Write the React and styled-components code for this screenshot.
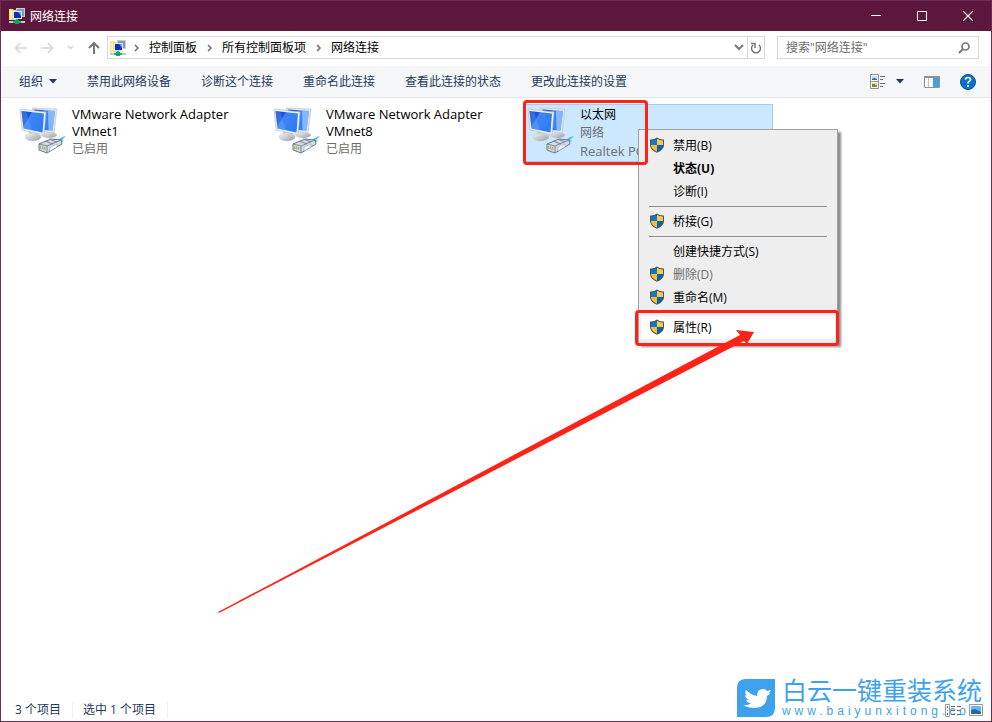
import styled, { createGlobalStyle } from "styled-components";

const GlobalStyle = createGlobalStyle`
  * {
    box-sizing: border-box;
  }

  body {
    margin: 0;
    background: #fff;
  }

  body,
  button,
  input {
    font-family: "Open Sans", "Noto Sans CJK SC", sans-serif;
    font-size: 12px;
  }

  button {
    padding: 0;
    border: 0;
    background: none;
    color: inherit;
  }
`;

const Window = styled.div`
  position: relative;
  display: flex;
  flex-direction: column;
  min-height: 100vh;
  border: 1px solid #6c2b51;
  background: #fff;
  overflow: hidden;
`;

const TitleBar = styled.header`
  display: flex;
  align-items: center;
  height: 30px;
  padding-left: 8px;
  background: #5e173c;
  color: #fff;
`;

const WindowTitle = styled.h1`
  flex: 1;
  margin: 0 0 0 5px;
  font-size: 12px;
  font-weight: 400;
`;

const CaptionButton = styled.button`
  display: flex;
  align-items: center;
  justify-content: center;
  width: 46px;
  height: 30px;
`;

const AddressRow = styled.div`
  display: flex;
  align-items: center;
  height: 35px;
  padding: 0 12px 2px 13px;
`;

const NavButtons = styled.nav`
  display: flex;
  align-items: center;
  justify-content: space-between;
  width: 86px;
  margin-right: 7px;
`;

const IconButton = styled.button`
  display: flex;
  align-items: center;
  justify-content: center;
`;

const AddressBar = styled.div`
  display: flex;
  flex: 1;
  align-items: center;
  height: 23px;
  padding-left: 2px;
  border: 1px solid #d9d9d9;
`;

const Crumbs = styled.div`
  display: flex;
  flex: 1;
  align-items: center;
  gap: 9px;
  padding-left: 7px;
`;

const Crumb = styled.a`
  color: #000;
  line-height: 20px;
  text-decoration: none;
`;

const AddressButton = styled(IconButton)`
  width: 17px;
  height: 21px;
  border-left: ${(props) => (props.$divided ? "1px solid #d9d9d9" : "0")};
`;

const SearchBox = styled.label`
  display: flex;
  align-items: center;
  width: 202px;
  height: 23px;
  margin-left: 12px;
  padding: 0 8px;
  border: 1px solid #d9d9d9;
`;

const SearchInput = styled.input`
  flex: 1;
  min-width: 0;
  padding: 0;
  border: 0;
  outline: 0;
  background: none;

  &::placeholder {
    color: #6d6d6d;
    opacity: 1;
  }
`;

const CommandBar = styled.div`
  display: flex;
  align-items: center;
  gap: 30px;
  height: 32px;
  padding: 0 15px 0 18px;
  border-bottom: 1px solid #e5e7ea;
  background: #f5f6f8;
  color: #1e395b;
`;

const Command = styled.button`
  display: flex;
  align-items: center;
  gap: 6px;
  line-height: 20px;
  white-space: nowrap;
`;

const ViewTools = styled.div`
  display: flex;
  align-items: center;
  gap: 20px;
  margin-left: auto;
`;

const ViewButton = styled(IconButton)`
  gap: 10px;
`;

const Content = styled.main`
  flex: 1;
  padding: 6px 14px;
`;

const Adapters = styled.ul`
  display: flex;
  flex-wrap: wrap;
  gap: 4px;
  margin: 0;
  padding: 0;
  list-style: none;
`;

const Adapter = styled.li`
  position: relative;
  display: flex;
  gap: 5px;
  width: 250px;
  height: 58px;
  padding: 1px 3px;
  border: 1px solid ${(props) => (props.$selected ? "#99d1ff" : "transparent")};
  background: ${(props) => (props.$selected ? "#cce8ff" : "transparent")};
`;

const AdapterText = styled.div`
  flex: 1;
`;

const AdapterName = styled.div`
  font-size: ${(props) => (props.$cjk ? "12px" : "13px")};
  line-height: ${(props) => (props.$cjk ? "18px" : "17px")};
`;

const AdapterDetail = styled.div`
  color: #6d6d6d;
  font-size: ${(props) => (props.$latin ? "13px" : "12px")};
  line-height: 18px;
`;

const Menu = styled.div`
  position: absolute;
  z-index: 2;
  top: 24px;
  left: 114px;
  width: 200px;
  padding: 4px 2px;
  border: 1px solid #a0a0a0;
  background: #eee;
  box-shadow: 3px 3px 2px rgba(0, 0, 0, 0.45);
`;

const MenuItem = styled.button`
  display: grid;
  grid-template-columns: 16px 1fr;
  gap: 8px;
  align-items: center;
  width: 100%;
  height: 23px;
  padding-left: 8px;
  background: ${(props) => (props.$active ? "#fff" : "none")};
  color: ${(props) => (props.disabled ? "#6d6d6d" : "#000")};
  font-weight: ${(props) => (props.$bold ? 700 : 400)};
  text-align: left;
`;

const MenuLabel = styled.span`
  grid-column: 2;
  line-height: 20px;
`;

const MenuDivider = styled.hr`
  height: 1px;
  margin: 3px 8px;
  border: 0;
  background: #919191;
`;

const Shield = styled.svg`
  width: 16px;
  height: 16px;
  margin-bottom: 1px;
`;

const Highlight = styled.div`
  position: absolute;
  z-index: 3;
  top: ${(props) => props.$top}px;
  left: ${(props) => props.$left}px;
  width: ${(props) => props.$width}px;
  height: ${(props) => props.$height}px;
  border: 3px solid #ff2317;
  border-radius: 4px;
  pointer-events: none;
`;

const Arrow = styled.svg`
  position: absolute;
  z-index: 4;
  top: 329px;
  left: 217px;
  pointer-events: none;
`;

const StatusBar = styled.footer`
  display: flex;
  align-items: center;
  height: 22px;
  padding: 0 8px 0 14px;
  color: #1e395b;
`;

const StatusText = styled.span`
  margin-right: 10px;
  padding-right: 11px;
  border-right: 1px solid #f0f0f0;
  line-height: 16px;
`;

const StatusViews = styled.div`
  position: relative;
  z-index: 2;
  display: flex;
  gap: 8px;
  margin-left: auto;
`;

const Watermark = styled.div`
  position: absolute;
  right: 7px;
  bottom: 4px;
  display: flex;
  gap: 7px;
  color: #3ea1ee;
  font-family: "Liberation Sans", "Noto Sans CJK SC", sans-serif;
  pointer-events: none;
`;

const WatermarkText = styled.div`
  display: flex;
  flex-direction: column;
  justify-content: space-between;
`;

const WatermarkName = styled.div`
  font-size: 25px;
  line-height: 24px;
  white-space: nowrap;
`;

const WatermarkSite = styled.div`
  font-size: 12px;
  letter-spacing: 4px;
  line-height: 12px;
`;

const NetworkIcon = () => (
  <svg width="16" height="16" viewBox="0 0 16 16" aria-hidden="true">
    <path d="M0 1h4l1 1h3v10H0z" fill="#f5df83" />
    <path d="M1 2h2v9H1z" fill="#fff1ad" />
    <path d="M7 0h9v9H7z" fill="#cbd0c5" />
    <path d="M8 1h7v7H8z" fill="#7d97c8" />
    <path d="M4 3h9v8H4z" fill="#e1e6dc" />
    <path d="M5 4h7v6H5z" fill="#0b32b8" />
    <path d="M9 4h3v4z" fill="#62a2ff" />
    <path d="M0 13h16v2H0z" fill="#c2c6c7" />
    <path d="M4 13h8v2H4zM7 11h2v3H7z" fill="#16b779" />
    <path d="M6 12h4v4H6z" fill="#08a967" />
  </svg>
);

const AdapterIcon = () => (
  <svg width="48" height="48" viewBox="0 0 48 48" aria-hidden="true">
    <defs>
      <linearGradient id="screen" x1="0" y1="0" x2="1" y2="0.6">
        <stop offset="0" stopColor="#0f48c8" />
        <stop offset="0.35" stopColor="#1a59e2" />
        <stop offset="0.4" stopColor="#3f86f5" />
        <stop offset="1" stopColor="#2f7cf8" />
      </linearGradient>
      <linearGradient id="stand" x1="0" y1="0" x2="1" y2="1">
        <stop offset="0" stopColor="#f7f8f9" />
        <stop offset="1" stopColor="#979ca1" />
      </linearGradient>
    </defs>
    <ellipse cx="30" cy="29" rx="8" ry="3" fill="url(#stand)" />
    <path d="M13 2 38 3 35 27 24 26z" fill="#e3e6e8" stroke="#b8bec2" strokeWidth="0.6" />
    <path d="M15 3.500 36 5 33.500 24.500 24 24z" fill="url(#screen)" />
    <path d="m29 5 7 0-2.500 19.500-4-.5z" fill="#a9cffb" opacity="0.7" />
    <path d="M10 25h8l1 5h-9z" fill="#c6cacd" />
    <ellipse cx="14" cy="31" rx="8" ry="4" fill="url(#stand)" stroke="#c3c7c9" strokeWidth="0.5" />
    <path d="M1 3 27 6 25 29 3 24z" fill="#eef0f1" stroke="#b2b7bb" strokeWidth="0.6" />
    <path d="M2.500 5 25 7.500 23.500 26.500 4.500 22.500z" fill="url(#screen)" />
    <path d="M2.500 5 7 5.500 13 24.300 4.500 22.500z" fill="#7aaff8" opacity="0.3" />
    <path d="M37 36q4-5 10-6l-4 4 2 1-6 3z" fill="#58bfdc" />
    <path d="m20 38 12-5 10 1 1 4-15 9-8-3z" fill="#d5dce3" stroke="#63778e" />
    <path d="m20 38 8 2 14-6M28 40v7M26 35l8 3M30 33l8 3" fill="none" stroke="#7588a0" />
    <path d="m21.500 40 .5 3m1.500-2.500.5 3m1.500-2.500.5 3" stroke="#b99b40" />
    <path d="m31 41 7-3v3l-7 4z" fill="#f8fafc" stroke="#8999aa" strokeWidth="0.5" />
  </svg>
);

const ShieldIcon = () => (
  <Shield viewBox="0 0 16 16" aria-hidden="true">
    <path d="M8 0.500Q11 3 15 2.500V8q0 5-7 7.800Q1 13 1 8V2.500Q5 3 8 0.500z" fill="#47525c" />
    <path d="M8 1.800V8H2V3.500q3.500.2 6-1.700z" fill="#0b78d1" />
    <path d="M8 1.800q2.500 1.900 6 1.700V8H8z" fill="#ffc83d" />
    <path d="M2 8h6v6.700Q2 12 2 8z" fill="#ffbd2e" />
    <path d="M8 8h6q0 4-6 6.700z" fill="#0563b8" />
  </Shield>
);

const Chevron = () => (
  <svg width="7" height="10" viewBox="0 0 7 10" aria-hidden="true">
    <path d="m2 2 3 3-3 3" fill="none" stroke="#6d6d6d" strokeWidth="1.5" />
  </svg>
);

const Caret = () => (
  <svg width="8" height="5" viewBox="0 0 8 5" aria-hidden="true">
    <path d="M0 0h8L4 4.500z" fill="#1e395b" />
  </svg>
);

const DetailsIcon = () => (
  <svg width="16" height="16" viewBox="0 0 16 16" aria-hidden="true">
    <path d="M.5.5h8v14h-8zM.5 7.500h8" fill="#fff" stroke="#929292" />
    <path d="M2 2h5v4H2z" fill="#b9dcfa" />
    <path d="m2 5 2-1 3 1v1H2z" fill="#28679c" />
    <path d="M2 9h5v4H2z" fill="#e7d676" />
    <path d="M2 10h3v3H2z" fill="#4d9444" />
    <path d="M5 11h2v2H5z" fill="#d66d39" />
    <path d="M10 2.500h5M10 5.500h3M10 9.500h5M10 12.500h3" stroke="#707070" />
  </svg>
);

const WatermarkLogo = () => (
  <svg width="38" height="38" viewBox="0 0 38 38" aria-hidden="true">
    <path d="M9 0h29v29q0 9-9 9H0V9Q0 0 9 0z" fill="#3ea1ee" />
    <path
      d="M6 26q5 1 8-2-4 0-5-3h3q-4-2-4-5l2 1q-3-3-1-6 5 5 11 6 0-7 6-7 3 0 4 2l4-1-2 3 1 1-3 2q0 11-12 12-7 0-12-3z"
      fill="#fff"
    />
  </svg>
);

const commands = [
  "禁用此网络设备",
  "诊断这个连接",
  "重命名此连接",
  "查看此连接的状态",
  "更改此连接的设置",
];

const menuGroups = [
  [
    { label: "禁用(B)", shield: true },
    { label: "状态(U)", bold: true },
    { label: "诊断(I)" },
  ],
  [{ label: "桥接(G)", shield: true }],
  [
    { label: "创建快捷方式(S)" },
    { label: "删除(D)", shield: true, disabled: true },
    { label: "重命名(M)", shield: true },
  ],
  [{ label: "属性(R)", shield: true, active: true }],
];

const ContextMenu = () => (
  <Menu role="menu">
    {menuGroups.map((group, index) => (
      <div key={group[0].label}>
        {index > 0 && <MenuDivider />}
        {group.map((item) => (
          <MenuItem
            key={item.label}
            type="button"
            role="menuitem"
            disabled={item.disabled}
            $bold={item.bold}
            $active={item.active}
          >
            {item.shield && <ShieldIcon />}
            <MenuLabel>{item.label}</MenuLabel>
          </MenuItem>
        ))}
      </div>
    ))}
  </Menu>
);

const App = () => {
  return (
    <>
      <GlobalStyle />
      <Window>
        <TitleBar>
          <NetworkIcon />
          <WindowTitle>网络连接</WindowTitle>
          <CaptionButton type="button" aria-label="最小化">
            <svg width="10" height="10" stroke="#fff">
              <path d="M0 4.500h10" />
            </svg>
          </CaptionButton>
          <CaptionButton type="button" aria-label="最大化">
            <svg width="10" height="10" stroke="#fff" fill="none">
              <path d="M.5.5h9v9h-9z" />
            </svg>
          </CaptionButton>
          <CaptionButton type="button" aria-label="关闭">
            <svg width="10" height="10" stroke="#fff" strokeWidth="1.2">
              <path d="m0 0 10 10M10 0 0 10" />
            </svg>
          </CaptionButton>
        </TitleBar>

        <AddressRow>
          <NavButtons>
            <IconButton type="button" aria-label="后退">
              <svg width="13" height="12" fill="none" stroke="#d5d5d5" strokeWidth="1.5">
                <path d="M13 6H2M6 1 1.500 6 6 11" />
              </svg>
            </IconButton>
            <IconButton type="button" aria-label="前进">
              <svg width="13" height="12" fill="none" stroke="#d5d5d5" strokeWidth="1.5">
                <path d="M0 6h11M7 1l4.500 5L7 11" />
              </svg>
            </IconButton>
            <IconButton type="button" aria-label="最近位置">
              <svg width="7" height="5" fill="none" stroke="#d5d5d5" strokeWidth="1.5">
                <path d="m1 1 2.500 2.500L6 1" />
              </svg>
            </IconButton>
            <IconButton type="button" aria-label="向上">
              <svg width="12" height="13" fill="none" stroke="#777" strokeWidth="2">
                <path d="M6 13V2M1 7l5-5 5 5" />
              </svg>
            </IconButton>
          </NavButtons>
          <AddressBar>
            <NetworkIcon />
            <Crumbs>
              <Chevron />
              <Crumb href="#panel">控制面板</Crumb>
              <Chevron />
              <Crumb href="#items">所有控制面板项</Crumb>
              <Chevron />
              <Crumb href="#network">网络连接</Crumb>
            </Crumbs>
            <AddressButton type="button" aria-label="展开">
              <svg width="10" height="7" fill="none" stroke="#777" strokeWidth="2">
                <path d="m1 1 4 4 4-4" />
              </svg>
            </AddressButton>
            <AddressButton type="button" aria-label="刷新" $divided>
              <svg width="12" height="12" fill="none" stroke="#777" strokeWidth="1.5">
                <path d="M3 3a4.500 4.500 0 1 0 6 0M1 1.500h4V6" />
              </svg>
            </AddressButton>
          </AddressBar>
          <SearchBox>
            <SearchInput type="search" aria-label="搜索" placeholder={'搜索"网络连接"'} />
            <svg width="12" height="12" fill="none" stroke="#777" strokeWidth="1.7">
              <circle cx="7.500" cy="4.500" r="3.500" />
              <path d="M5 7 1 11" strokeWidth="2" />
            </svg>
          </SearchBox>
        </AddressRow>

        <CommandBar>
          <Command type="button">
            组织
            <Caret />
          </Command>
          {commands.map((command) => (
            <Command key={command} type="button">
              {command}
            </Command>
          ))}
          <ViewTools>
            <ViewButton type="button" aria-label="更改视图">
              <DetailsIcon />
              <Caret />
            </ViewButton>
            <IconButton type="button" aria-label="预览窗格">
              <svg width="16" height="12">
                <path d="M.5.5h15v11H.5z" fill="#fff" stroke="#8b9299" />
                <path d="M0 0h16v2H0z" fill="#8b9299" />
                <path d="M4.500 2v9" stroke="#c0c4c7" />
                <path d="M9 2h6v9H9z" fill="#43a0e5" />
              </svg>
            </IconButton>
            <IconButton type="button" aria-label="帮助">
              <svg width="16" height="16">
                <circle cx="8" cy="8" r="7.500" fill="#0870cf" stroke="#164d86" />
                <path d="M5.500 5.500q.2-2 2.500-2 2.500 0 2.500 2 0 1.200-1.500 2Q8 8 8 9.500" fill="none" stroke="#fff" strokeWidth="1.700" />
                <circle cx="8" cy="12" r="1.100" fill="#fff" />
              </svg>
            </IconButton>
          </ViewTools>
        </CommandBar>

        <Content>
          <Adapters>
            {["VMnet1", "VMnet8"].map((name) => (
              <Adapter key={name}>
                <AdapterIcon />
                <AdapterText>
                  <AdapterName>
                    VMware Network Adapter
                    <br />
                    {name}
                  </AdapterName>
                  <AdapterDetail>已启用</AdapterDetail>
                </AdapterText>
              </Adapter>
            ))}
            <Adapter $selected>
              <AdapterIcon />
              <AdapterText>
                <AdapterName $cjk>以太网</AdapterName>
                <AdapterDetail>网络</AdapterDetail>
                <AdapterDetail $latin>Realtek PC</AdapterDetail>
              </AdapterText>
              <ContextMenu />
              <Highlight $top={-5} $left={-1} $width={125} $height={65} />
              <Highlight $top={205} $left={111} $width={204} $height={36} />
            </Adapter>
          </Adapters>
        </Content>

        <StatusBar>
          <StatusText>3 个项目</StatusText>
          <StatusText>选中 1 个项目</StatusText>
          <StatusViews>
            <IconButton type="button" aria-label="详细信息">
              <svg width="16" height="13">
                <path d="M.5.5h4v12h-4z" fill="#fff" stroke="#999" />
                <path d="M2 2h1v2H2zM2 6h1v1H2z" fill="#777" />
                <path d="M2 9h1v2H2z" fill="#d22" />
                <path d="M6 2.500h4M12 2.500h4M6 6.500h4M12 6.500h4M6 10.500h4M12 10.500h4" stroke="#666" />
              </svg>
            </IconButton>
            <IconButton type="button" aria-label="大图标">
              <svg width="14" height="12">
                <path d="M.5.5h13v11H.5z" fill="#fff" stroke="#999" />
                <path d="M2 2h10v8H2z" fill="#68b5f2" />
                <path d="m2 6 4-1 6 3v2H2z" fill="#286b9b" />
              </svg>
            </IconButton>
          </StatusViews>
        </StatusBar>

        <Watermark>
          <WatermarkLogo />
          <WatermarkText>
            <WatermarkName>白云一键重装系统</WatermarkName>
            <WatermarkSite>www.baiyunxitong.com</WatermarkSite>
          </WatermarkText>
        </Watermark>

        <Arrow width="540" height="286" viewBox="0 0 540 286" aria-hidden="true">
          <path d="M0 282 522 5l-4-5 18 2-7 12-3-3L1 283z" fill="#ff2317" />
        </Arrow>
      </Window>
    </>
  );
};

export default App;
